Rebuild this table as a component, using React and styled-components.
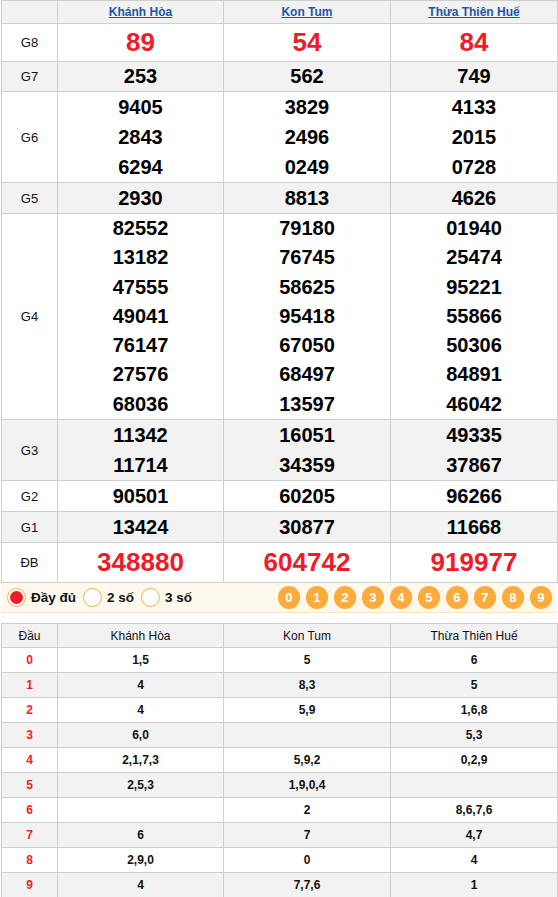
import styled, { createGlobalStyle } from "styled-components";

const GlobalStyle = createGlobalStyle`
  body {
    margin: 0;
    background: #fff;
    font-family: "Liberation Sans", Arial, sans-serif;
  }
`;

const Wrapper = styled.div`
  width: 558px;
  padding: 0 1px;
  box-sizing: border-box;
`;

const Table = styled.table`
  width: 556px;
  border-collapse: collapse;
  table-layout: fixed;
  td,
  th {
    border: 1px solid #cfcfcf;
    padding: 0;
    text-align: center;
    vertical-align: middle;
  }
`;

const Row = styled.tr`
  background: ${(p) => (p.$gray ? "#f2f2f2" : "#fff")};
`;

const HeadCell = styled.th`
  height: 22px;
  font-size: 12px;
  font-weight: bold;
`;

const CityLink = styled.a`
  color: #1c56a8;
  text-decoration: underline;
`;

const Label = styled.td`
  font-size: 13px;
  color: #111;
`;

const Num = styled.div`
  font-size: ${(p) => (p.$big ? "26px" : "20px")};
  line-height: ${(p) => p.$lh || "30px"};
  font-weight: bold;
  color: ${(p) => (p.$red ? "#ee1c2b" : "#000")};
`;

const OptionBar = styled.div`
  display: flex;
  align-items: center;
  height: 29px;
  background: #fff8ec;
  border-bottom: 1px solid #fde4c2;
  padding: 0 5px 0 6px;
`;

const Radios = styled.div`
  display: flex;
  align-items: center;
  gap: 7px;
  flex: 1;
`;

const RadioItem = styled.label`
  display: flex;
  align-items: center;
  gap: 5px;
  font-size: 13.5px;
  font-weight: bold;
  color: #111;
`;

const Circle = styled.span`
  width: 19px;
  height: 19px;
  border-radius: 50%;
  border: 1px solid #f6ae47;
  background: #fff;
  box-sizing: border-box;
  display: flex;
  align-items: center;
  justify-content: center;
  &::after {
    content: "";
    width: 13px;
    height: 13px;
    border-radius: 50%;
    background: ${(p) => (p.$on ? "#ee1c2b" : "transparent")};
  }
`;

const Balls = styled.div`
  display: flex;
  gap: 5.5px;
`;

const Ball = styled.span`
  width: 22.5px;
  height: 22.5px;
  border-radius: 50%;
  background: #fdab3c;
  color: #fff;
  font-size: 13px;
  font-weight: bold;
  display: flex;
  align-items: center;
  justify-content: center;
`;

const Gap = styled.div`
  height: 10px;
`;

const SmallHead = styled.th`
  height: 23px;
  font-size: 12px;
  font-weight: normal;
  color: #111;
`;

const SmallCell = styled.td`
  height: 24px;
  font-size: 12px;
  font-weight: bold;
  color: ${(p) => (p.$red ? "#ee1c2b" : "#111")};
`;

const cities = ["Khánh Hòa", "Kon Tum", "Thừa Thiên Huế"];

const prizes = [
  { name: "G8", big: true, lh: "37px", red: true, vals: [["89"], ["54"], ["84"]] },
  { name: "G7", lh: "29px", vals: [["253"], ["562"], ["749"]] },
  {
    name: "G6",
    vals: [
      ["9405", "2843", "6294"],
      ["3829", "2496", "0249"],
      ["4133", "2015", "0728"],
    ],
  },
  { name: "G5", vals: [["2930"], ["8813"], ["4626"]] },
  {
    name: "G4",
    lh: "29.3px",
    vals: [
      ["82552", "13182", "47555", "49041", "76147", "27576", "68036"],
      ["79180", "76745", "58625", "95418", "67050", "68497", "13597"],
      ["01940", "25474", "95221", "55866", "50306", "84891", "46042"],
    ],
  },
  {
    name: "G3",
    vals: [
      ["11342", "11714"],
      ["16051", "34359"],
      ["49335", "37867"],
    ],
  },
  { name: "G2", vals: [["90501"], ["60205"], ["96266"]] },
  { name: "G1", vals: [["13424"], ["30877"], ["11668"]] },
  { name: "ĐB", big: true, lh: "39px", red: true, vals: [["348880"], ["604742"], ["919977"]] },
];

const heads = [
  ["1,5", "5", "6"],
  ["4", "8,3", "5"],
  ["4", "5,9", "1,6,8"],
  ["6,0", "", "5,3"],
  ["2,1,7,3", "5,9,2", "0,2,9"],
  ["2,5,3", "1,9,0,4", ""],
  ["", "2", "8,6,7,6"],
  ["6", "7", "4,7"],
  ["2,9,0", "0", "4"],
  ["4", "7,7,6", "1"],
];

const Cols = () => (
  <colgroup>
    <col style={{ width: 56 }} />
    <col style={{ width: 166 }} />
    <col style={{ width: 167 }} />
    <col style={{ width: 167 }} />
  </colgroup>
);

export default function App() {
  return (
    <Wrapper>
      <GlobalStyle />
      <Table>
        <Cols />
        <thead>
          <Row $gray>
            <HeadCell />
            {cities.map((c) => (
              <HeadCell key={c}>
                <CityLink href="#">{c}</CityLink>
              </HeadCell>
            ))}
          </Row>
        </thead>
        <tbody>
          {prizes.map((p, i) => (
            <Row key={p.name} $gray={i % 2 === 1}>
              <Label>{p.name}</Label>
              {p.vals.map((list, j) => (
                <td key={j}>
                  {list.map((n) => (
                    <Num key={n} $big={p.big} $red={p.red} $lh={p.lh}>
                      {n}
                    </Num>
                  ))}
                </td>
              ))}
            </Row>
          ))}
        </tbody>
      </Table>

      <OptionBar>
        <Radios>
          <RadioItem>
            <Circle $on />
            Đầy đủ
          </RadioItem>
          <RadioItem>
            <Circle />
            2 số
          </RadioItem>
          <RadioItem>
            <Circle />
            3 số
          </RadioItem>
        </Radios>
        <Balls>
          {[0, 1, 2, 3, 4, 5, 6, 7, 8, 9].map((d) => (
            <Ball key={d}>{d}</Ball>
          ))}
        </Balls>
      </OptionBar>

      <Gap />

      <Table>
        <Cols />
        <thead>
          <Row $gray>
            <SmallHead>Đầu</SmallHead>
            {cities.map((c) => (
              <SmallHead key={c}>{c}</SmallHead>
            ))}
          </Row>
        </thead>
        <tbody>
          {heads.map((r, i) => (
            <Row key={i} $gray={i % 2 === 1}>
              <SmallCell $red>{i}</SmallCell>
              {r.map((v, j) => (
                <SmallCell key={j}>{v}</SmallCell>
              ))}
            </Row>
          ))}
        </tbody>
      </Table>
    </Wrapper>
  );
}
